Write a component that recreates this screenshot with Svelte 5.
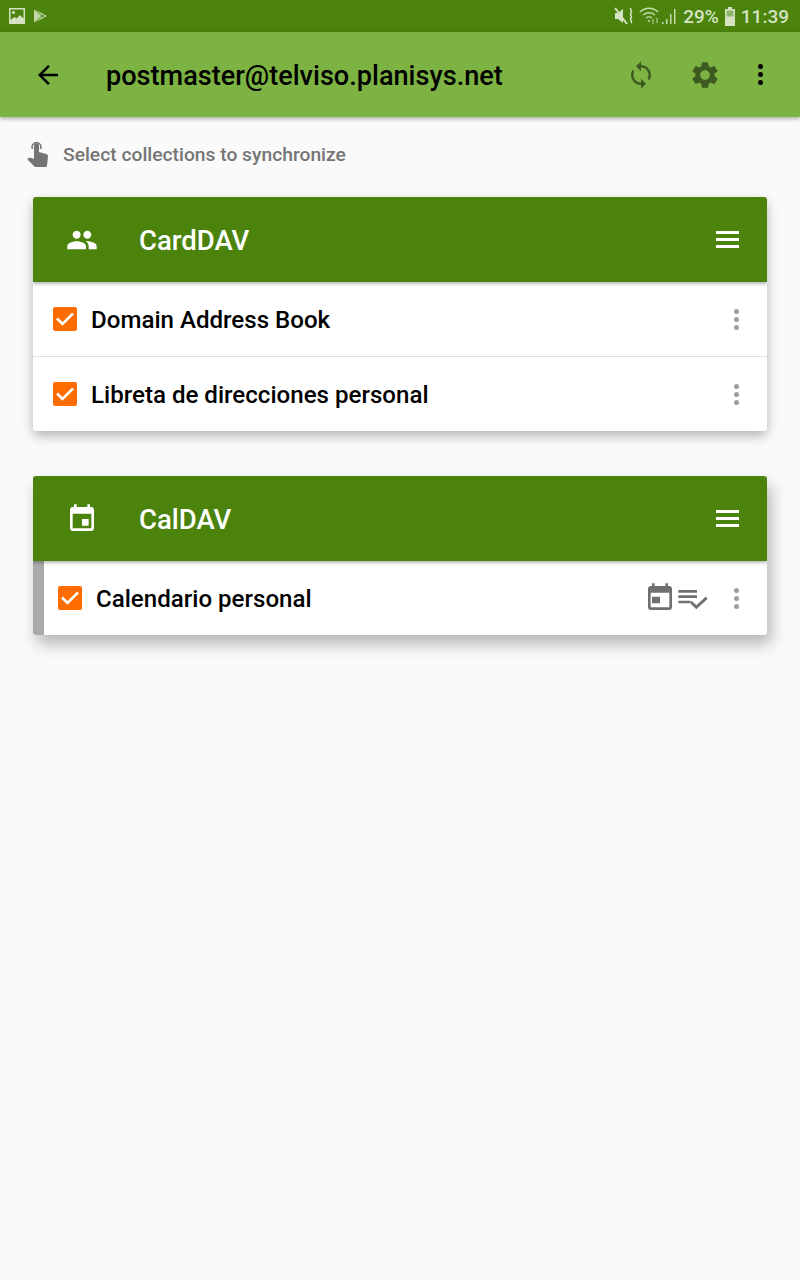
<script>
  const cardIcon = "M16 11c1.66 0 2.99-1.34 2.99-3S17.66 5 16 5c-1.66 0-3 1.34-3 3s1.34 3 3 3zm-8 0c1.66 0 2.99-1.34 2.99-3S9.66 5 8 5C6.34 5 5 6.34 5 8s1.34 3 3 3zm0 2c-2.33 0-7 1.17-7 3.5V19h14v-2.5c0-2.33-4.67-3.5-7-3.5zm8 0c-.29 0-.62.02-.97.05 1.16.84 1.97 1.97 1.97 3.45V19h6v-2.5c0-2.33-4.67-3.5-7-3.5z";
  const calIcon = "M17 12h-5v5h5v-5zM16 1v2H8V1H6v2H5c-1.11 0-1.99.9-1.99 2L3 19c0 1.1.89 2 2 2h14c1.1 0 2-.9 2-2V5c0-1.1-.9-2-2-2h-1V1h-2zm3 18H5V8h14v11z";

  const sections = [
    { title: "CardDAV", icon: cardIcon, rows: [
      { name: "Domain Address Book" },
      { name: "Libreta de direcciones personal" }
    ] },
    { title: "CalDAV", icon: calIcon, rows: [
      { name: "Calendario personal", color: true, tasks: true }
    ] }
  ];
</script>

<div class="status">
  <div class="status-left">
    <svg width="18" height="18" viewBox="0 0 18 18"><path fill="#d5e3c2" d="M1 1h16v16H1z"/><path fill="#4b830d" d="M2.5 2.5h13v9l-3.5-3.5-3.5 3.5-2-1.5-4 3z"/><circle cx="5.5" cy="5.5" r="1.5" fill="#d5e3c2"/></svg>
    <svg width="15" height="16" viewBox="0 0 15 16"><path fill="#c5d8ab" d="M1 1l13 7-13 7z"/><path fill="none" stroke="#4b830d" stroke-width="1" d="M1 1l8 7-8 7M9 8l2.500-1.500M9 8l2.500 1.500"/></svg>
  </div>
  <div class="status-right">
    <svg width="22" height="20" viewBox="0 0 22 20"><path fill="#d5e3c2" d="M1 7h3l5-4v14l-5-4H1z"/><path stroke="#d5e3c2" stroke-width="2" d="M1 2l12 16"/><path fill="none" stroke="#d5e3c2" stroke-width="1.6" d="M17 2c-2 2 2 3 0 5s2 3 0 5 2 3 0 5"/></svg>
    <svg class="wifi" width="22" height="20" viewBox="0 0 22 20" fill="none" stroke="#c5d8ab" stroke-width="1.4"><path d="M1 6c5-5 13-5 18 0M4 9c3.5-3 8.5-3 12 0M7 12c2-1.5 4-1.5 6 0"/><circle cx="10" cy="15" r="1" fill="#c5d8ab" stroke="none"/><path stroke-width="1" d="M14 13v5M18 12v5"/></svg>
    <svg width="16" height="18" viewBox="0 0 16 18"><path fill="#c5d8ab" d="M1 15h1.500v2H1zM5 12h1.500v5H5zM9 7h1.500v10H9zM13 2h1.500v15H13z"/></svg>
    <span class="pct">29%</span>
    <svg width="12" height="19" viewBox="0 0 12 19"><path fill="#d5e3c2" d="M4 0h4v2h3v17H1V2h3z"/><path fill="#8fb56a" d="M2.500 3.500h7v6h-7z"/></svg>
    <span class="time">11:39</span>
  </div>
</div>

<header class="toolbar">
  <button class="back" aria-label="Back">
    <svg width="30" height="30" viewBox="0 0 24 24"><path fill="#000" d="M20 11H7.830l5.590-5.590L12 4l-8 8 8 8 1.410-1.410L7.830 13H20v-2z"/></svg>
  </button>
  <h1>postmaster@telviso.planisys.net</h1>
  <div class="actions">
    <svg width="30" height="30" viewBox="0 0 24 24"><path fill="#3f5a20" d="M12 4V1L8 5l4 4V6c3.310 0 6 2.690 6 6 0 1.010-.25 1.970-.7 2.800l1.460 1.460C19.540 15.030 20 13.570 20 12c0-4.420-3.580-8-8-8zm0 14c-3.310 0-6-2.690-6-6 0-1.010.25-1.970.7-2.800L5.240 7.740C4.460 8.970 4 10.430 4 12c0 4.420 3.580 8 8 8v3l4-4-4-4v3z"/></svg>
    <svg class="gear" width="32" height="32" viewBox="0 0 24 24"><path fill="#3f5a20" d="M19.140 12.940c.04-.3.060-.61.060-.94 0-.32-.02-.64-.07-.94l2.030-1.580c.18-.14.23-.41.120-.61l-1.920-3.320c-.12-.22-.37-.29-.59-.22l-2.390.96c-.5-.38-1.030-.7-1.620-.94l-.36-2.540c-.04-.24-.24-.41-.48-.41h-3.840c-.24 0-.43.170-.47.410l-.36 2.540c-.59.24-1.130.57-1.620.94l-2.390-.96c-.22-.08-.47 0-.59.22L2.740 8.870c-.12.210-.08.470.12.610l2.030 1.580c-.05.3-.09.630-.09.940s.02.640.07.940l-2.030 1.580c-.18.140-.23.410-.12.610l1.920 3.320c.12.220.37.290.59.220l2.390-.96c.5.380 1.030.7 1.620.94l.36 2.540c.05.240.24.410.48.410h3.840c.24 0 .44-.17.47-.41l.36-2.540c.59-.24 1.130-.56 1.620-.94l2.390.96c.22.080.47 0 .59-.22l1.920-3.320c.12-.22.070-.47-.12-.61l-2.010-1.580zM12 15.600c-1.980 0-3.600-1.620-3.600-3.600s1.620-3.600 3.600-3.600 3.600 1.620 3.600 3.600-1.620 3.600-3.600 3.600z"/></svg>
    <span class="kebab dark"><i></i><i></i><i></i></span>
  </div>
</header>

<main>
  <div class="hint">
    <svg width="26" height="30" viewBox="0 0 26 30"><path fill="#757575" d="M9 16V6.500a2.500 2.500 0 0 1 5 0V13l7 2c1.500.4 2 1.200 2 2.400L22 26.500c-.1 1-.8 1.500-1.800 1.500H10l-7-7c-.8-1-.3-2.200 1-2.300 1.200-.1 3 .1 5 1.300z"/><path fill="none" stroke="#757575" stroke-width="1.500" d="M7.500 10a4.500 4.500 0 1 1 8 0"/></svg>
    <span>Select collections to synchronize</span>
  </div>

  {#each sections as section}
    <section class="card">
      <div class="card-head">
        <svg class="head-icon" width="32" height="32" viewBox="0 0 24 24"><path fill="#fff" d={section.icon}/></svg>
        <h2>{section.title}</h2>
        <span class="burger"><i></i><i></i><i></i></span>
      </div>
      {#each section.rows as row}
        <div class="row" class:color={row.color}>
          <span class="check">
            <svg width="24" height="24" viewBox="0 0 24 24"><path fill="none" stroke="#fff" stroke-width="2.600" d="M4 11.500l5.500 5.500L20 6.500"/></svg>
          </span>
          <span class="name">{row.name}</span>
          {#if row.tasks}
            <svg class="cal" width="32" height="32" viewBox="0 0 24 24"><path fill="#707070" d="M12 11H6v5h6zM16 1v2H8V1H6v2H5c-1.100 0-2 .9-2 2v14c0 1.100.9 2 2 2h14c1.100 0 2-.9 2-2V5c0-1.100-.9-2-2-2h-1V1zm3 18H5V8h14z"/></svg>
            <svg class="tasks" width="32" height="32" viewBox="0 0 24 24"><path fill="#707070" d="M1 6h14v2H1zM1 10h14v2H1zM1 14h9v2H1zM23 12.500 21.500 11l-7 6.500L11 14l-1.500 1.500 5 5z"/></svg>
          {/if}
          <span class="kebab"><i></i><i></i><i></i></span>
        </div>
      {/each}
    </section>
  {/each}
</main>

<style>
  :global(body) {
    background: #fafafa;
    font-family: Roboto, sans-serif;
  }
  .status {
    height: 32px;
    background: #4b830d;
    display: flex;
    align-items: center;
    justify-content: space-between;
    padding: 0 11px 0 8px;
    color: #d5e3c2;
  }
  .status-left,
  .status-right {
    display: flex;
    align-items: center;
  }
  .status-left {
    gap: 7px;
  }
  .status-right {
    font-size: 19px;
    font-weight: 500;
  }
  .wifi {
    margin-left: 3px;
  }
  .pct {
    margin: 0 5px 0 6px;
  }
  .time {
    margin-left: 5px;
  }
  .toolbar {
    height: 85px;
    background: #7cb342;
    display: flex;
    align-items: center;
    box-shadow: 0 2px 4px rgba(0, 0, 0, 0.3);
    position: relative;
  }
  .back {
    width: 106px;
    padding: 0 0 0 33px;
    border: none;
    background: none;
    display: flex;
    text-align: left;
  }
  h1 {
    margin: 0;
    padding-top: 2px;
    flex: 1;
    font-size: 27.100px;
    font-weight: 500;
    color: #000;
  }
  .actions {
    display: flex;
    align-items: center;
    padding-right: 37px;
  }
  .gear {
    margin: 0 37px 0 33px;
  }
  .kebab {
    display: flex;
    flex-direction: column;
    gap: 3px;
  }
  .kebab i {
    width: 5px;
    height: 5px;
    border-radius: 50%;
    background: #9e9e9e;
  }
  .kebab.dark i {
    background: #000;
  }
  main {
    padding: 0 33px;
  }
  .hint {
    display: flex;
    align-items: center;
    height: 80px;
    margin-left: -8px;
    gap: 12px;
    padding-bottom: 6px;
    box-sizing: border-box;
    color: #757575;
    font-size: 19.250px;
    font-weight: 500;
  }
  .card {
    background: #fff;
    border-radius: 3px;
    margin-bottom: 45px;
    box-shadow: 0 5px 12px rgba(0, 0, 0, 0.28);
    overflow: hidden;
  }
  .card:last-child {
    box-shadow: 4px 9px 16px rgba(0, 0, 0, 0.28);
  }
  .card-head {
    height: 85px;
    background: #4b830d;
    display: flex;
    align-items: center;
    color: #fff;
    box-shadow: 0 2px 3px rgba(0, 0, 0, 0.28);
    position: relative;
  }
  .head-icon {
    margin-left: 33px;
  }
  h2 {
    margin: 0 0 0 41px;
    padding-top: 2px;
    flex: 1;
    font-size: 27.500px;
    font-weight: 500;
  }
  .burger {
    display: flex;
    flex-direction: column;
    gap: 4.500px;
    margin-right: 28px;
  }
  .burger i {
    width: 23px;
    height: 2.500px;
    background: #fff;
  }
  .row {
    height: 74px;
    display: flex;
    align-items: center;
    padding-left: 20px;
    border-bottom: 1px solid #e0e0e0;
  }
  .row:last-child {
    border-bottom: none;
  }
  .row.color {
    border-left: 11px solid #aaa;
    padding-left: 14px;
  }
  .check {
    width: 24px;
    height: 24px;
    border-radius: 2px;
    background: #ff6d00;
    display: flex;
  }
  .name {
    flex: 1;
    margin-left: 14px;
    padding-top: 2px;
    font-size: 24.100px;
    font-weight: 500;
    color: #000;
  }
  .cal {
    margin-right: 1px;
  }
  .tasks {
    margin-right: 25px;
  }
  .row .kebab {
    margin-right: 28px;
  }
</style>
